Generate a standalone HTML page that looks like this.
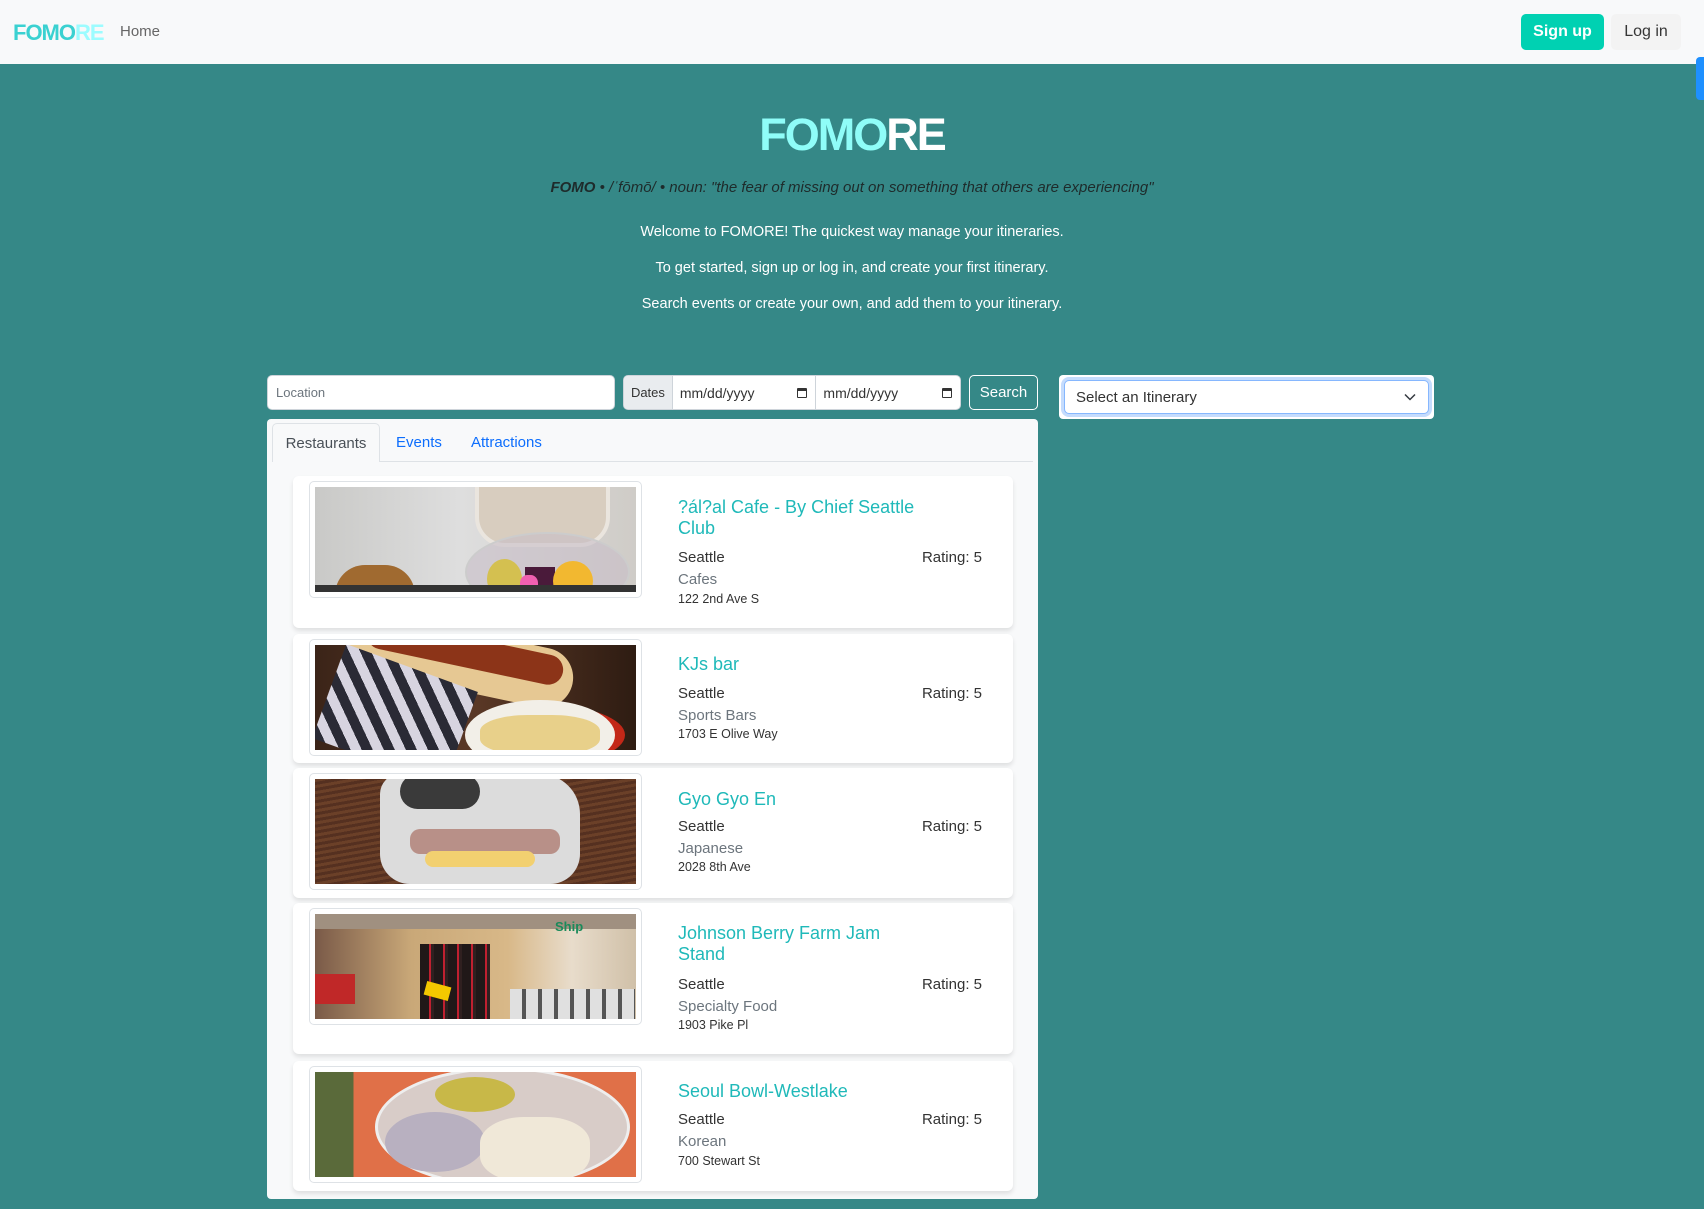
<!DOCTYPE html>
<html><head><meta charset="utf-8"><style>
*{box-sizing:border-box;margin:0;padding:0}
body{width:1704px;height:1209px;overflow:hidden;background:#358887;font-family:"Liberation Sans",sans-serif;position:relative}
.abs{position:absolute}
.nav{left:0;top:0;width:1704px;height:64px;background:#f8f9fa}
.logo{font-weight:900;letter-spacing:-1px}
.btn{position:absolute;border-radius:5px;font-size:16px;display:flex;align-items:center;justify-content:center}
.hero{left:0;width:1704px;text-align:center;color:#fff;font-size:14.5px}
.inp{background:#fff;border:1px solid #ced4da;border-radius:5px;font-size:13px;color:#6c757d;display:flex;align-items:center}
.panel{left:267px;top:419px;width:771px;height:780px;background:#f8f9fa;border-radius:4px}
.card{position:absolute;left:26px;width:720px;background:#fff;border-radius:6px;box-shadow:0 3px 5px rgba(0,0,0,.10)}
.imgbox{position:absolute;left:16px;top:5px;width:333px;border:1px solid #dee2e6;border-radius:5px;background:#fff;padding:5px}
.img{width:321px;height:105px;position:relative;overflow:hidden}
.t{position:absolute;left:385px;font-size:18px;color:#1fb9b9;line-height:21px}
.s{position:absolute;left:385px;font-size:15px;color:#333}
.r{position:absolute;right:31px;font-size:15px;color:#333}
.c{position:absolute;left:385px;font-size:15px;color:#6c757d}
.a{position:absolute;left:385px;font-size:12.5px;color:#333}
</style></head><body>
<div class="abs nav">
  <div class="abs logo" style="left:13px;top:20px;font-size:22px"><span style="color:#3ad1d1">FOMO</span><span style="color:#9cfcff">RE</span></div>
  <div class="abs" style="left:120px;top:23px;font-size:15px;color:#666">Home</div>
  <div class="btn" style="left:1521px;top:14px;width:83px;height:36px;background:#00d1b2;color:#fff;font-weight:bold">Sign up</div>
  <div class="btn" style="left:1611px;top:14px;width:70px;height:36px;background:#f3f3f3;color:#363636">Log in</div>
</div>
<div class="abs" style="left:1696px;top:57px;width:8px;height:43px;background:#1e90ff;border-radius:4px 0 0 4px"></div>

<div class="abs hero logo" style="top:110px;font-size:45px;line-height:50px;letter-spacing:-2px"><span style="color:#8ffdf8">FOMO</span><span style="color:#fff">RE</span></div>
<div class="abs hero" style="top:179px;font-style:italic;color:#1e2b2b;font-size:15px"><b>FOMO</b> • /ˈfōmō/ • noun: "the fear of missing out on something that others are experiencing"</div>
<div class="abs hero" style="top:224px">Welcome to FOMORE! The quickest way manage your itineraries.</div>
<div class="abs hero" style="top:260px">To get started, sign up or log in, and create your first itinerary.</div>
<div class="abs hero" style="top:296px">Search events or create your own, and add them to your itinerary.</div>

<div class="abs inp" style="left:267px;top:375px;width:348px;height:35px;padding-left:8px">Location</div>
<div class="abs inp" style="left:623px;top:375px;width:338px;height:35px;color:#333;overflow:hidden">
  <div style="width:49px;height:100%;background:#e9ecef;border-right:1px solid #ced4da;display:flex;align-items:center;justify-content:center">Dates</div>
  <div style="width:144px;height:100%;border-right:1px solid #ced4da;display:flex;align-items:center;justify-content:space-between;padding:0 8px 0 7px;font-size:14px">mm/dd/yyyy<span style="width:10px;height:10px;border:1.5px solid #333;border-top-width:3px;border-radius:1px"></span></div>
  <div style="width:144px;height:100%;display:flex;align-items:center;justify-content:space-between;padding:0 8px 0 7px;font-size:14px">mm/dd/yyyy<span style="width:10px;height:10px;border:1.5px solid #333;border-top-width:3px;border-radius:1px"></span></div>
</div>
<div class="btn" style="left:969px;top:375px;width:69px;height:35px;border:1px solid #fff;color:#fff;font-size:15px">Search</div>

<div class="abs" style="left:1059px;top:375px;width:375px;height:44px;background:#fff;border-radius:4px"></div>
<div class="abs" style="left:1064px;top:380px;width:365px;height:34px;background:#fff;border:1.5px solid #86b7fe;border-radius:5px;box-shadow:0 0 0 3px #c5dcfd;font-size:15px;color:#333;display:flex;align-items:center;padding-left:11px">Select an Itinerary
  <svg class="abs" style="right:12px;top:12px" width="12" height="8" viewBox="0 0 12 8"><path d="M1 1.5l5 5 5-5" fill="none" stroke="#343a40" stroke-width="1.5"/></svg></div>

<div class="abs panel">
  <div class="abs" style="left:5px;top:42px;width:761px;height:1px;background:#dee2e6"></div>
  <div class="abs" style="left:5px;top:4px;width:108px;height:39px;background:#f8f9fa;border:1px solid #dee2e6;border-bottom:none;border-radius:5px 5px 0 0;font-size:15px;color:#495057;display:flex;align-items:center;justify-content:center">Restaurants</div>
  <div class="abs" style="left:129px;top:15px;font-size:15px;color:#0d6efd">Events</div>
  <div class="abs" style="left:204px;top:15px;font-size:15px;color:#0d6efd">Attractions</div>

  <div class="card" style="top:57px;height:152px">
    <div class="imgbox"><div class="img" style="background:linear-gradient(90deg,#c9c9c7,#dedede 45%,#cfccc7)">
      <div class="abs" style="left:160px;top:-10px;width:135px;height:70px;background:#d8cdbf;border-radius:0 0 30px 30px;border:4px solid #eae5de"></div>
      <div class="abs" style="left:150px;top:45px;width:165px;height:80px;border-radius:50%;border:2px solid #ccc;background:rgba(200,190,200,.6)"></div>
      <div class="abs" style="left:172px;top:72px;width:35px;height:40px;border-radius:50%;background:#d4c050"></div>
      <div class="abs" style="left:210px;top:80px;width:30px;height:30px;background:#4a1a3a"></div>
      <div class="abs" style="left:205px;top:88px;width:18px;height:20px;background:#f060b0;border-radius:40%"></div>
      <div class="abs" style="left:238px;top:74px;width:40px;height:40px;border-radius:50%;background:#f2b830"></div>
      <div class="abs" style="left:20px;top:78px;width:80px;height:40px;background:#a06a30;border-radius:30px 30px 0 0"></div>
      <div class="abs" style="left:0;top:98px;width:321px;height:7px;background:#333"></div>
    </div></div>
    <div class="t" style="top:21px">?ál?al Cafe - By Chief Seattle<br>Club</div>
    <div class="s" style="top:73px">Seattle</div><div class="r" style="top:73px">Rating: 5</div>
    <div class="c" style="top:95px">Cafes</div>
    <div class="a" style="top:116px">122 2nd Ave S</div>
  </div>

  <div class="card" style="top:215px;height:129px">
    <div class="imgbox"><div class="img" style="background:linear-gradient(90deg,#3b2418,#5a3826 50%,#2e1c12)">
      <div class="abs" style="left:30px;top:-15px;width:230px;height:60px;background:#e6c893;border-radius:30px;transform:rotate(12deg)"></div>
      <div class="abs" style="left:50px;top:-8px;width:200px;height:30px;background:#8c3418;border-radius:15px;transform:rotate(12deg)"></div>
      <div class="abs" style="left:10px;top:20px;width:140px;height:100px;background:repeating-linear-gradient(45deg,#2a2a35 0 10px,#d7d4e0 10px 20px);transform:rotate(20deg)"></div>
      <div class="abs" style="left:150px;top:60px;width:160px;height:60px;background:#c32818;border-radius:50%"></div>
      <div class="abs" style="left:150px;top:55px;width:150px;height:70px;background:#f2efe8;border-radius:50%"></div>
      <div class="abs" style="left:165px;top:70px;width:120px;height:40px;background:#e8d08a;border-radius:40%"></div>
    </div></div>
    <div class="t" style="top:20px">KJs bar</div>
    <div class="s" style="top:51px">Seattle</div><div class="r" style="top:51px">Rating: 5</div>
    <div class="c" style="top:73px">Sports Bars</div>
    <div class="a" style="top:93px">1703 E Olive Way</div>
  </div>

  <div class="card" style="top:349px;height:130px">
    <div class="imgbox"><div class="img" style="background:repeating-linear-gradient(170deg,#6b4028 0 3px,#553020 3px 6px)">
      <div class="abs" style="left:65px;top:-5px;width:200px;height:110px;background:#dcdcdc;border-radius:20px 40px 30px 30px"></div>
      <div class="abs" style="left:85px;top:-5px;width:80px;height:35px;background:#3a3a3a;border-radius:20px"></div>
      <div class="abs" style="left:95px;top:50px;width:150px;height:25px;background:#b89088;border-radius:10px"></div>
      <div class="abs" style="left:110px;top:72px;width:110px;height:16px;background:#f2d070;border-radius:8px"></div>
    </div></div>
    <div class="t" style="top:21px">Gyo Gyo En</div>
    <div class="s" style="top:50px">Seattle</div><div class="r" style="top:50px">Rating: 5</div>
    <div class="c" style="top:72px">Japanese</div>
    <div class="a" style="top:92px">2028 8th Ave</div>
  </div>

  <div class="card" style="top:484px;height:151px">
    <div class="imgbox"><div class="img" style="background:linear-gradient(90deg,#7a5a48,#c9a878 30%,#d8b888 60%,#e8dccb 80%,#d0c0a8)">
      <div class="abs" style="left:0;top:0;width:321px;height:15px;background:#a09080"></div>
      <div class="abs" style="left:0;top:60px;width:40px;height:30px;background:#c02828"></div>
      <div class="abs" style="left:105px;top:30px;width:70px;height:75px;background:repeating-linear-gradient(90deg,#201818 0 9px,#c02030 9px 11px,#302020 11px 14px)"></div>
      <div class="abs" style="left:240px;top:5px;font-size:13px;font-weight:bold;color:#1a8a5a">Ship</div>
      <div class="abs" style="left:195px;top:75px;width:125px;height:30px;background:repeating-linear-gradient(90deg,#e0e0e0 0 12px,#555 12px 16px)"></div>
      <div class="abs" style="left:110px;top:70px;width:25px;height:14px;background:#f4c800;transform:rotate(15deg)"></div>
    </div></div>
    <div class="t" style="top:20px">Johnson Berry Farm Jam<br>Stand</div>
    <div class="s" style="top:73px">Seattle</div><div class="r" style="top:73px">Rating: 5</div>
    <div class="c" style="top:95px">Specialty Food</div>
    <div class="a" style="top:115px">1903 Pike Pl</div>
  </div>

  <div class="card" style="top:642px;height:130px">
    <div class="imgbox"><div class="img" style="background:linear-gradient(90deg,#5a6a3a 0 12%,#e07048 12% 100%)">
      <div class="abs" style="left:60px;top:-5px;width:255px;height:120px;background:#d8ccc8;border-radius:50%;border:3px solid #eee"></div>
      <div class="abs" style="left:70px;top:40px;width:100px;height:60px;background:#b8b0c0;border-radius:50%"></div>
      <div class="abs" style="left:120px;top:5px;width:80px;height:35px;background:#c8b848;border-radius:50%"></div>
      <div class="abs" style="left:165px;top:45px;width:110px;height:65px;background:#f0e8d8;border-radius:40%"></div>
    </div></div>
    <div class="t" style="top:20px">Seoul Bowl-Westlake</div>
    <div class="s" style="top:50px">Seattle</div><div class="r" style="top:50px">Rating: 5</div>
    <div class="c" style="top:72px">Korean</div>
    <div class="a" style="top:93px">700 Stewart St</div>
  </div>
</div>
</body></html>
